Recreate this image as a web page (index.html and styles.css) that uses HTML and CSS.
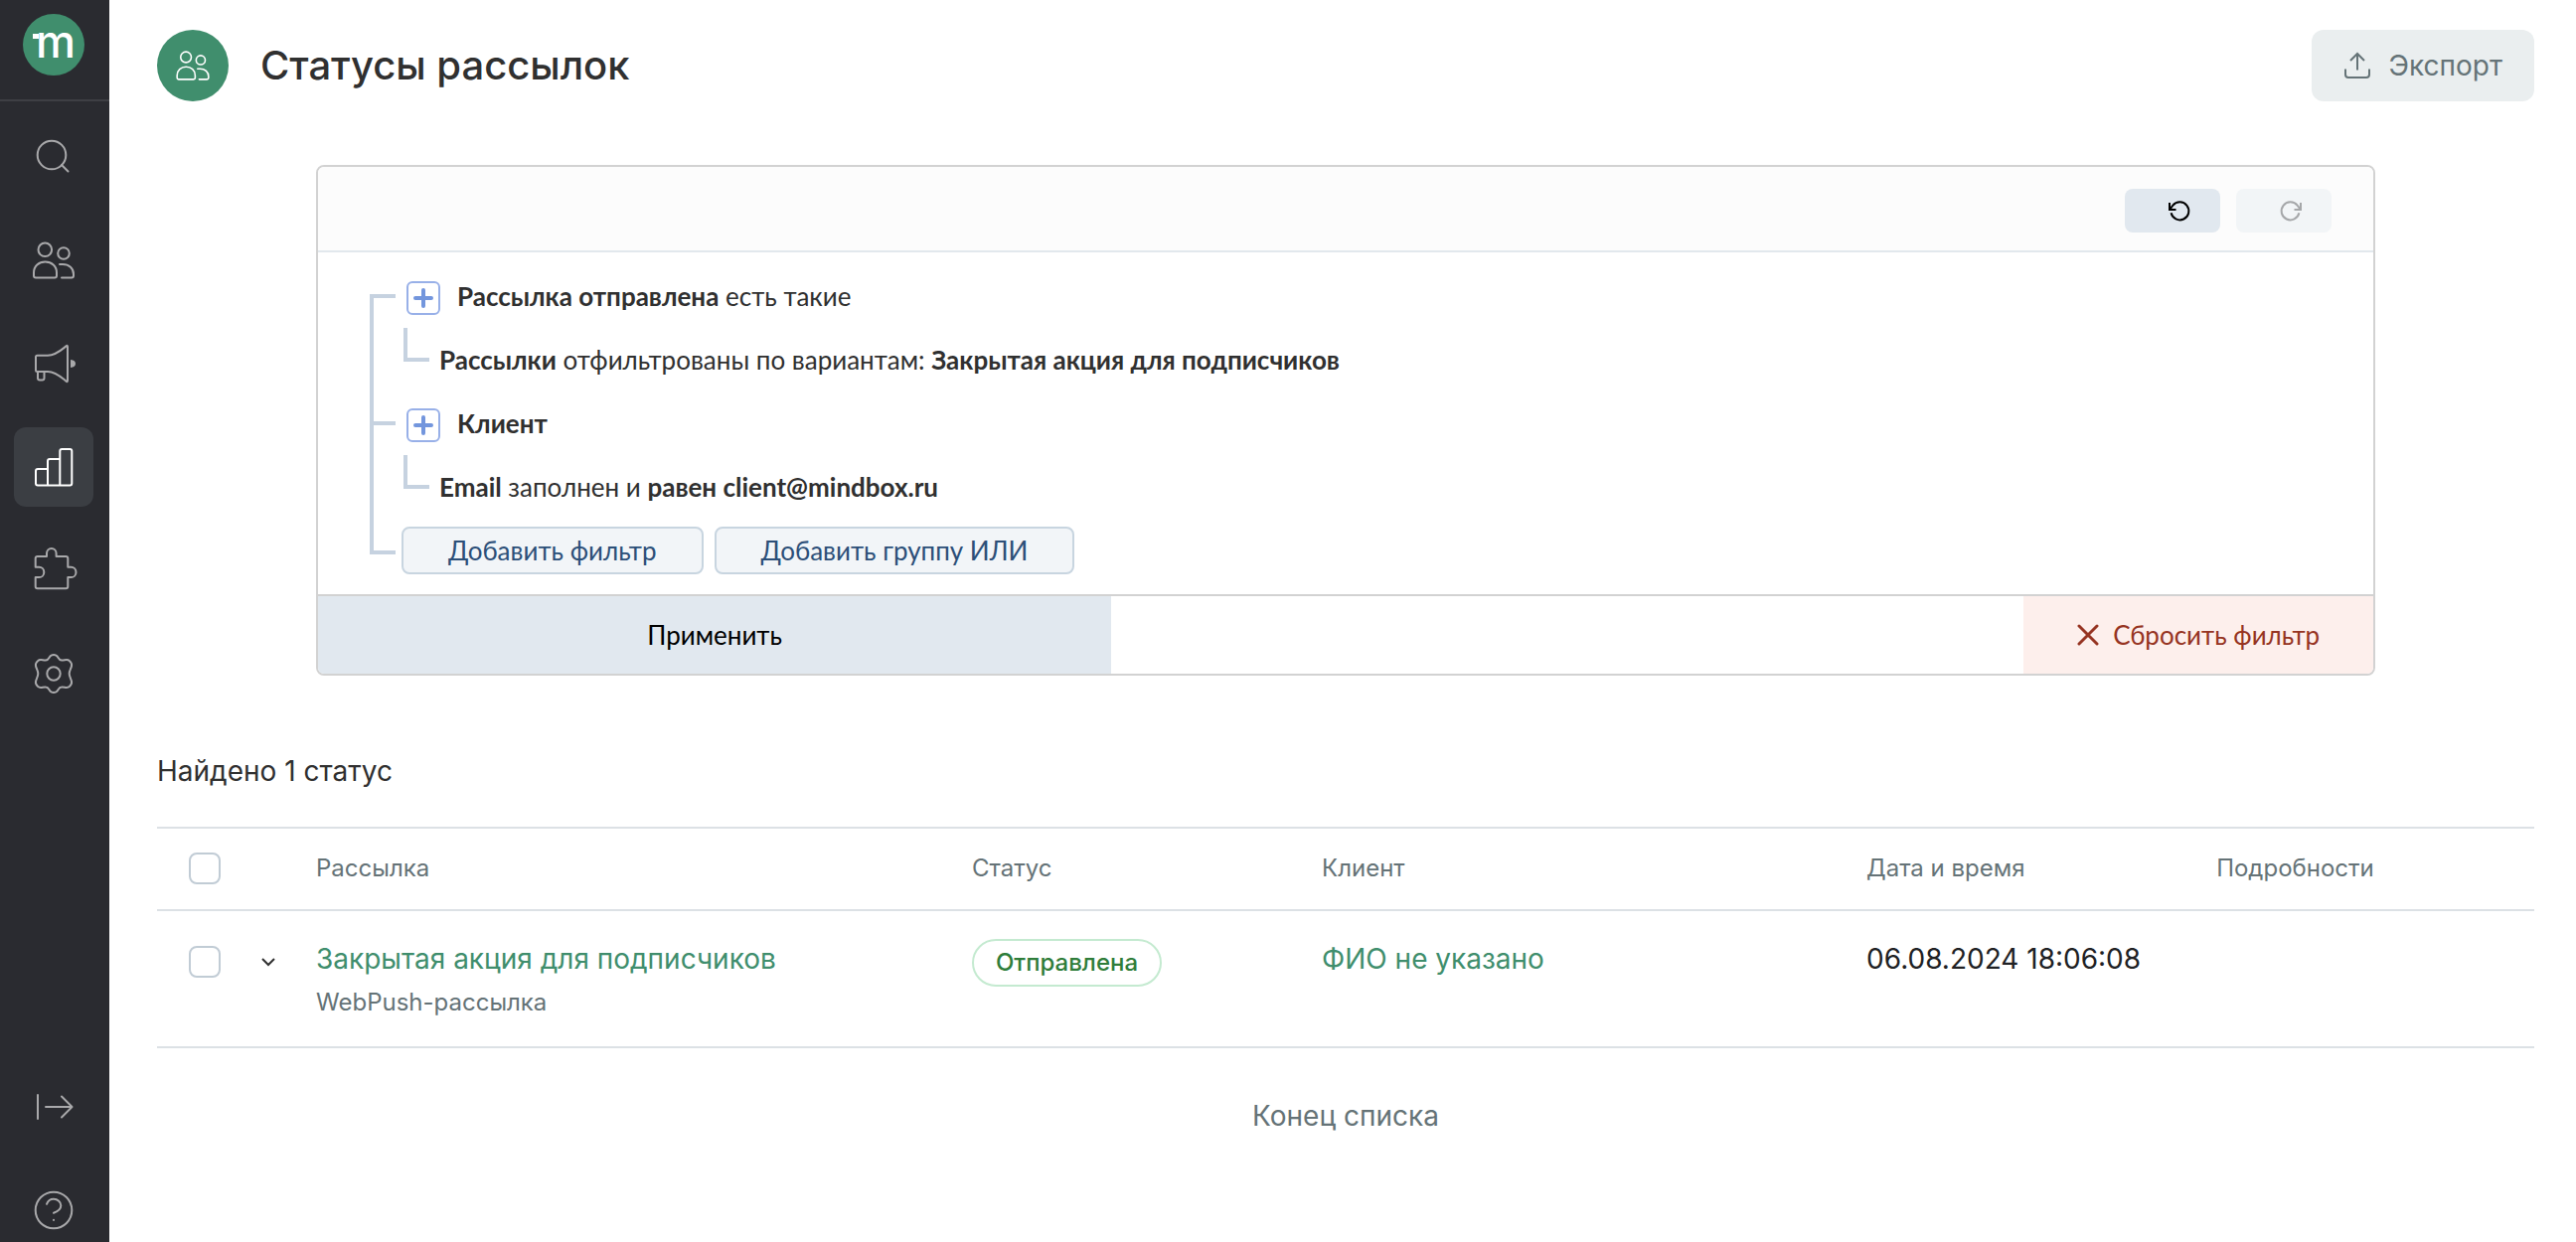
FILE: index.html
```html
<!DOCTYPE html>
<html lang="ru">
<head>
  <meta charset="utf-8">
  <meta name="viewport" content="width=device-width, initial-scale=1">
  <title>Статусы рассылок</title>
  <link rel="stylesheet" href="styles.css">
</head>
<body>
<div class="app">
  <aside class="sidebar">
    <a class="logo" href="#" aria-label="Mindbox">
      <svg class="logo-mark" viewBox="0 0 62 62">
        <circle cx="31" cy="31" r="31"/>
        <text class="logo-letter" x="33" y="44" text-anchor="middle">m</text>
        <rect class="logo-flag" x="10" y="20" width="6" height="5"/>
      </svg>
    </a>
    <nav class="nav">
      <a class="nav-item" href="#" aria-label="Поиск">
        <svg class="icon" viewBox="0 0 48 48"><circle cx="22" cy="22" r="14.3"/><path d="M32 32l6.5 6.5"/></svg>
      </a>
      <a class="nav-item" href="#" aria-label="Клиенты">
        <svg class="icon" viewBox="0 0 48 48"><circle cx="15.3" cy="13.3" r="6.8"/><circle cx="34" cy="17" r="5.8"/><path d="M4 39.5V36.5C4 30 9 25.5 15.5 25.5S27 30 27 36.5V39.5Q27 41.5 25 41.5H6Q4 41.5 4 39.5ZM30 28h3C39.5 28 44 32 44 38V39.5Q44 41.5 42 41.5H32"/></svg>
      </a>
      <a class="nav-item" href="#" aria-label="Кампании">
        <svg class="icon" viewBox="0 0 48 48"><path d="M7.500 15.700H18C26 15.700 32 10 36.500 6.400Q38 5 38 7V41Q38 43 36.500 41.600C32 38 26 32 18 32H7.500Q6 32 6 30.500V17.200Q6 15.700 7.500 15.700ZM8 32V38.500Q8 40.500 10 40.500H12.500Q14.500 40.500 14.500 38.500V32"/><path class="icon-fill" d="M41 20q5 .5 5 4t-5 4z"/></svg>
      </a>
      <a class="nav-item nav-item-active" href="#" aria-label="Отчёты" aria-current="page">
        <svg class="icon" viewBox="0 0 48 48"><path d="M18 26H8Q6 26 6 28V40.500Q6 42.500 8 42.500H40.300Q42.300 42.500 42.300 40.500V8Q42.300 6 40.300 6H32.300Q30.300 6 30.300 8V42.500M30.300 16H20Q18 16 18 18V42.500"/></svg>
      </a>
      <a class="nav-item" href="#" aria-label="Интеграции">
        <svg class="icon" viewBox="0 2 48 48"><path d="M5.700 22.700V14Q5.700 12 7.700 12H17V9a4.800 5 0 0 1 9.600 0V12H36.300Q38.300 12 38.300 14V22.700H41.500a5 5.200 0 0 1 0 10.400H38.300V42.300Q38.300 44.300 36.300 44.300H7.700Q5.700 44.300 5.700 42.300V33.100H9.300a5 5.200 0 0 0 0-10.400Z"/></svg>
      </a>
      <a class="nav-item" href="#" aria-label="Настройки">
        <svg class="icon" viewBox="0 0 48 48"><circle cx="24" cy="24" r="6.700"/><path d="M21.500 5.600Q24 4.600 26.500 5.600C29 7 28.600 10.500 32 10.600C35 10.800 37.500 9 39.800 11Q42.600 13.300 42 16.300C41.500 19 39.700 21 39.700 24C39.700 27 41.500 29 42 31.700Q42.600 34.700 39.800 37C37.500 39 35 37.200 32 37.400C28.600 37.500 29 41 26.500 42.400Q24 43.400 21.500 42.400C19 41 19.400 37.500 16 37.400C13 37.200 10.500 39 8.200 37Q5.400 34.700 6 31.700C6.500 29 8.300 27 8.300 24C8.300 21 6.500 19 6 16.300Q5.400 13.300 8.200 11C10.500 9 13 10.800 16 10.600C19.400 10.500 19 7 21.500 5.600Z"/></svg>
      </a>
    </nav>
    <nav class="nav nav-bottom">
      <a class="nav-item" href="#" aria-label="Развернуть меню">
        <svg class="icon" viewBox="0 0 48 48"><path d="M8 12V36M16 24H42M32 13.500L42.500 24L32 34.500"/></svg>
      </a>
      <a class="nav-item" href="#" aria-label="Помощь">
        <svg class="icon" viewBox="0 0 48 48"><circle cx="24" cy="24" r="18.300"/><path d="M17 17.800C18.200 14.500 21 12.800 24 12.800C28 12.800 31.300 15.700 31.300 19.300C31.300 23.500 28 25.300 24 26.800M24 33.800v.2"/></svg>
      </a>
    </nav>
  </aside>

  <main class="main">
    <header class="page-header">
      <span class="page-icon">
        <svg class="icon" viewBox="0 0 48 48"><circle cx="15.3" cy="13.3" r="6.8"/><circle cx="34" cy="17" r="5.8"/><path d="M4 39.5V36.5C4 30 9 25.5 15.5 25.5S27 30 27 36.5V39.5Q27 41.5 25 41.5H6Q4 41.5 4 39.5ZM30 28h3C39.5 28 44 32 44 38V39.5Q44 41.5 42 41.5H32"/></svg>
      </span>
      <h1 class="page-title">Статусы рассылок</h1>
      <button class="export" type="button">
        <svg class="export-icon" viewBox="0 0 28 28"><path d="M2 17.500V23Q2 26 5 26H23Q26 26 26 23V17.500M14 18.500V2M7 9L14 2L21 9"/></svg>
        Экспорт
      </button>
    </header>

    <section class="filter">
      <div class="filter-toolbar">
        <button class="history" type="button" aria-label="Отменить">
          <svg class="history-icon" viewBox="0 0 24 24"><path d="M2 4V11H8.500M2.500 10.500L5.400 6.700A9 9 0 1 1 3.600 14.300"/></svg>
        </button>
        <button class="history" type="button" aria-label="Повторить" disabled>
          <svg class="history-icon" viewBox="0 0 24 24"><path d="M22 4V11H15.500M21.500 10.500L18.600 6.700A9 9 0 1 0 20.400 14.300"/></svg>
        </button>
      </div>
      <ul class="tree">
        <li class="group">
          <div class="condition">
            <button class="plus" type="button" aria-label="Добавить условие"><svg class="plus-icon" viewBox="0 0 20 20"><path d="M10 2V18M2 10H18"/></svg></button>
            <p class="rule"><b>Рассылка отправлена</b> есть такие</p>
          </div>
          <div class="detail">
            <p class="rule"><b>Рассылки</b> отфильтрованы по вариантам: <b>Закрытая акция для подписчиков</b></p>
          </div>
        </li>
        <li class="group">
          <div class="condition">
            <button class="plus" type="button" aria-label="Добавить условие"><svg class="plus-icon" viewBox="0 0 20 20"><path d="M10 2V18M2 10H18"/></svg></button>
            <p class="rule"><b>Клиент</b></p>
          </div>
          <div class="detail">
            <p class="rule"><b>Email</b> заполнен и <b>равен client@mindbox.ru</b></p>
          </div>
        </li>
        <li class="actions">
          <button class="add" type="button">Добавить фильтр</button>
          <button class="add" type="button">Добавить группу ИЛИ</button>
        </li>
      </ul>
      <div class="filter-footer">
        <button class="apply" type="button">Применить</button>
        <button class="reset" type="button">
          <svg class="reset-icon" viewBox="0 0 22 22"><path d="M2 2L20 20M20 2L2 20"/></svg>
          Сбросить фильтр
        </button>
      </div>
    </section>

    <p class="found">Найдено 1 статус</p>

    <table class="statuses">
      <colgroup>
        <col class="col-select"><col class="col-mailing"><col class="col-status"><col class="col-client"><col class="col-date"><col>
      </colgroup>
      <thead>
        <tr>
          <th><div class="select"><input class="check" type="checkbox" aria-label="Выбрать все"></div></th>
          <th>Рассылка</th>
          <th>Статус</th>
          <th>Клиент</th>
          <th>Дата и время</th>
          <th>Подробности</th>
        </tr>
      </thead>
      <tbody>
        <tr>
          <td>
            <div class="select">
              <input class="check" type="checkbox" aria-label="Выбрать рассылку">
              <button class="expand" type="button" aria-label="Развернуть"><svg class="expand-icon" viewBox="0 0 16 16"><path d="M2 5l6 6 6-6"/></svg></button>
            </div>
          </td>
          <td><a class="link" href="#">Закрытая акция для подписчиков</a><div class="kind">WebPush-рассылка</div></td>
          <td><span class="badge">Отправлена</span></td>
          <td><a class="link" href="#">ФИО не указано</a></td>
          <td>06.08.2024 18:06:08</td>
          <td></td>
        </tr>
      </tbody>
    </table>

    <p class="list-end">Конец списка</p>
  </main>
</div>
</body>
</html>
```
FILE: styles.css
```css
*, *::before, *::after { box-sizing: border-box; }

body {
  margin: 0;
  background: #fff;
  color: #303030;
  font: 400 28px/40px Inter, sans-serif;
}

h1, p, ul { margin: 0; padding: 0; }
ul { list-style: none; }
a { color: inherit; text-decoration: none; }
svg { display: block; }
button { border: 0; padding: 0; background: none; color: inherit; font: inherit; cursor: pointer; }

.app { display: flex; min-height: 100vh; }

/* Sidebar */
.sidebar {
  display: flex;
  flex-direction: column;
  flex: none;
  position: sticky;
  top: 0;
  width: 110px;
  height: 100vh;
  background: #2a2b30;
  color: #a9a9ab;
}
.logo {
  padding: 14px 0 24px 23px;
  border-bottom: 2px solid #3e3f44;
}
.logo-mark { width: 62px; height: 62px; fill: #408e6d; }
.logo-letter { fill: #fff; font-size: 45px; font-weight: 500; }
.logo-flag { fill: #fff; }
.nav {
  display: flex;
  flex-direction: column;
  gap: 24px;
  padding: 16px 16px 0 14px;
}
.nav-item {
  display: grid;
  place-items: center;
  height: 80px;
  border-radius: 12px;
}
.nav-item-active { background: #3b3e43; color: #fff; }
.nav-bottom { gap: 40px; margin-top: auto; }
.nav-bottom .nav-item { height: 64px; }
.icon {
  width: 48px;
  height: 48px;
  fill: none;
  stroke: currentColor;
  stroke-width: 2;
  stroke-linecap: round;
  stroke-linejoin: round;
}
.icon-fill { fill: currentColor; stroke: none; }

/* Page header */
.main { flex: 1; min-width: 0; padding: 30px 42px 0 48px; }
.page-header { display: flex; align-items: center; }
.page-icon {
  display: grid;
  place-items: center;
  width: 72px;
  height: 72px;
  border-radius: 50%;
  background: #408e6d;
  color: #fff;
}
.page-icon .icon { width: 38px; height: 38px; }
.page-title { margin-left: 32px; font-size: 40px; font-weight: 500; line-height: 48px; }
.export {
  display: flex;
  align-items: center;
  gap: 18px;
  height: 72px;
  margin-left: auto;
  padding: 0 32px;
  border-radius: 12px;
  background: #eaeeef;
  color: #657377;
}
.export-icon { width: 28px; height: 28px; fill: none; stroke: currentColor; stroke-width: 2; }

/* Filter */
.filter {
  margin: 64px 160px 0;
  border: 2px solid #d2d2d2;
  border-radius: 8px;
  overflow: hidden;
  font-family: Lato, sans-serif;
  font-size: 26px;
}
.filter-toolbar {
  display: flex;
  justify-content: flex-end;
  gap: 16px;
  padding: 22px 42px 18px;
  border-bottom: 2px solid #e2e8ed;
  background: #fcfcfc;
}
.history {
  display: grid;
  place-items: center;
  width: 96px;
  height: 44px;
  padding-left: 14px;
  border-radius: 8px;
  background: #e1e8ef;
  color: #000;
}
.history:disabled { background: #f2f5f7; color: #a5a7a9; cursor: default; }
.history-icon { width: 24px; height: 24px; fill: none; stroke: currentColor; stroke-width: 2; }

.tree { padding: 14px 0 20px 52px; }
.group { position: relative; padding-left: 34px; }
.group::before {
  content: "";
  position: absolute;
  top: 28px;
  bottom: -34px;
  left: 0;
  width: 26px;
  border: solid #c6d2e0;
  border-width: 4px 0 0 4px;
}
.condition { display: flex; align-items: center; gap: 17px; height: 64px; padding-left: 3px; }
.plus {
  display: grid;
  place-items: center;
  width: 34px;
  height: 34px;
  border: 2px solid #98b0e8;
  border-radius: 6px;
}
.plus-icon { width: 20px; height: 20px; fill: none; stroke: #7396dd; stroke-width: 4; stroke-linecap: round; }
.detail { position: relative; display: flex; align-items: center; height: 64px; padding-left: 36px; }
.detail::before {
  content: "";
  position: absolute;
  top: -2px;
  left: 0;
  width: 26px;
  height: 34px;
  border: solid #c6d2e0;
  border-width: 0 0 4px 4px;
}
.rule { padding-bottom: 4px; }
.actions { position: relative; display: flex; gap: 11px; margin-top: 6px; padding-left: 32px; }
.actions::before {
  content: "";
  position: absolute;
  top: 24px;
  left: 0;
  width: 26px;
  height: 4px;
  background: #c6d2e0;
}
.add {
  height: 48px;
  padding: 0 45px;
  border: 2px solid #c8d5e0;
  border-radius: 8px;
  background: #f2f5f8;
  color: #2c4f78;
}
.filter-footer {
  display: flex;
  justify-content: space-between;
  height: 80px;
  border-top: 2px solid #d2d2d2;
}
.apply { width: 38.6%; background: #e1e8ef; color: #000; }
.reset {
  display: flex;
  align-items: center;
  justify-content: center;
  gap: 14px;
  width: 17%;
  background: #fdefec;
  color: #963422;
}
.reset-icon { width: 22px; height: 22px; fill: none; stroke: currentColor; stroke-width: 3; stroke-linecap: round; }

/* Statuses */
.found { margin-top: 76px; }
.statuses {
  width: 100%;
  margin-top: 36px;
  border-spacing: 0;
  table-layout: fixed;
}
.col-select { width: 6.69%; }
.col-mailing { width: 27.59%; }
.col-status, .col-date { width: 14.72%; }
.col-client { width: 22.91%; }
.statuses th, .statuses td { padding: 0; text-align: left; vertical-align: top; }
.statuses th {
  padding: 24px 0 25px;
  border: solid #dce1e5;
  border-width: 2px 0;
  color: #657377;
  font-size: 24px;
  font-weight: 400;
  line-height: 32px;
}
.statuses td { padding: 28px 0; border-bottom: 2px solid #dce1e5; color: #202124; }
.select { display: flex; align-items: center; gap: 40px; padding-left: 32px; }
td .select { padding-top: 7px; }
.check {
  appearance: none;
  width: 32px;
  height: 32px;
  margin: 0;
  border: 2px solid #c1ccd5;
  border-radius: 8px;
  background: #fff;
}
.expand-icon { width: 16px; height: 16px; fill: none; stroke: #303030; stroke-width: 2; }
.statuses .link { display: block; color: #408e6d; }
.kind { margin-top: 8px; color: #657377; font-size: 24px; line-height: 32px; }
.badge {
  display: block;
  width: fit-content;
  padding: 0 22px;
  border: 2px solid #c4ead0;
  border-radius: 24px;
  color: #2f7d3a;
  font-size: 24px;
  font-weight: 500;
  line-height: 44px;
}
.list-end { margin-top: 48px; color: #657377; text-align: center; }
```
